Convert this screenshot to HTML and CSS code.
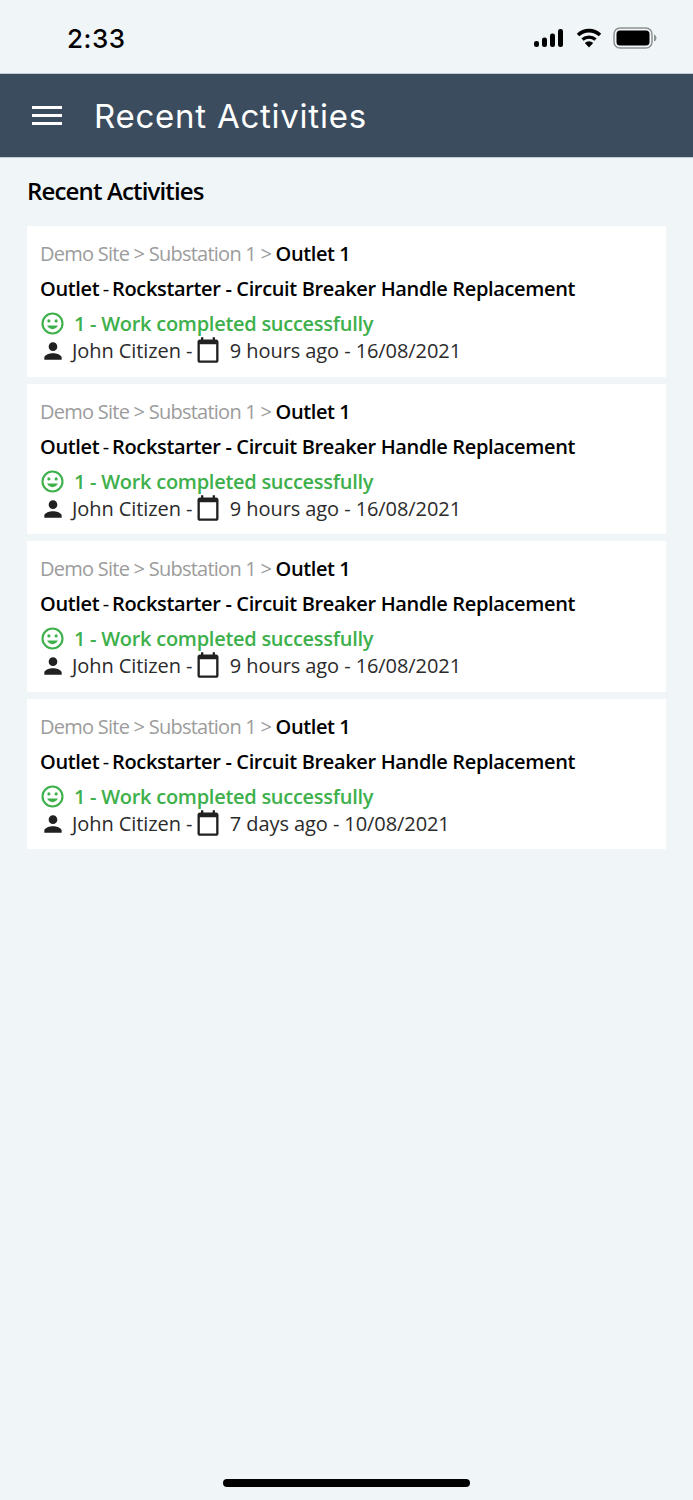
FILE: index.html
```html
<!DOCTYPE html>
<html lang="en">
<head>
<meta charset="UTF-8">
<meta name="viewport" content="width=device-width, initial-scale=1.0">
<title>Recent Activities</title>
<link rel="stylesheet" href="styles.css">
</head>
<body>

<svg class="icon-defs" width="0" height="0">
    <symbol id="i-smile" viewBox="0 0 24 24">
        <circle cx="12" cy="12" r="9.6" fill="none" stroke="currentColor" stroke-width="2"/>
        <circle cx="8.5" cy="9.5" r="1.5" fill="currentColor"/>
        <circle cx="15.5" cy="9.5" r="1.5" fill="currentColor"/>
        <path d="M12 17.5c2.33 0 4.31-1.46 5.11-3.5H6.89c.8 2.04 2.78 3.5 5.11 3.5z" fill="currentColor"/>
    </symbol>
    <symbol id="i-person" viewBox="0 0 24 24">
        <path d="M12 12c2.21 0 4-1.79 4-4s-1.79-4-4-4-4 1.79-4 4 1.79 4 4 4zm0 2c-2.67 0-8 1.34-8 4v2h16v-2c0-2.66-5.33-4-8-4z" fill="currentColor"/>
    </symbol>
    <symbol id="i-cal" viewBox="0 0 24 24">
        <path d="M19 3h-1V1h-2v2H8V1H6v2H5c-1.100 0-2 .9-2 2v16c0 1.100.9 2 2 2h14c1.100 0 2-.9 2-2V5c0-1.100-.9-2-2-2zm0 18H5V7h14v14z" fill="currentColor"/>
    </symbol>
</svg>

<div class="status-bar">
    <div class="clock">2:33</div>
    <div class="status-icons">
        <svg width="30" height="18" viewBox="0 0 30 18">
            <rect x="0" y="12" width="5" height="6" rx="2.2" fill="#000"/>
            <rect x="8" y="8.500" width="5" height="9.500" rx="2.2" fill="#000"/>
            <rect x="16" y="4.500" width="5" height="13.500" rx="2.2" fill="#000"/>
            <rect x="24" y="0" width="5" height="18" rx="2.2" fill="#000"/>
        </svg>
        <svg width="26" height="20" viewBox="0 0 26 20">
            <path d="M2 7 A16 16 0 0 1 24 7" fill="none" stroke="#000" stroke-width="3.600"/>
            <path d="M6.500 11.500 A10 10 0 0 1 19.500 11.500" fill="none" stroke="#000" stroke-width="3.400"/>
            <path d="M13 19.500 L8.800 15 A6 6 0 0 1 17.200 15 Z" fill="#000"/>
        </svg>
        <svg width="44" height="22" viewBox="0 0 44 22">
            <rect x="1" y="1" width="38" height="20" rx="6" fill="none" stroke="#8e9192" stroke-width="1.500"/>
            <rect x="3.500" y="3.500" width="33" height="15" rx="3.500" fill="#000"/>
            <path d="M41 7.500c1.500.5 2.500 2 2.500 3.500s-1 3-2.500 3.500z" fill="#8e9192"/>
        </svg>
    </div>
</div>

<div class="app-bar">
    <div class="menu-btn"><span></span><span></span><span></span></div>
    <div class="app-title">Recent Activities</div>
</div>

<div class="content">
    <div class="page-title">Recent Activities</div>

    <div class="card">
        <div class="crumbs">Demo Site &gt; Substation 1 &gt; <b>Outlet 1</b></div>
        <div class="job"><span class="job-type">Outlet</span> <i>-</i> Rockstarter - Circuit Breaker Handle Replacement</div>
        <div class="result"><svg class="ic-smile"><use href="#i-smile"/></svg>1 - Work completed successfully</div>
        <div class="meta"><svg class="ic-person"><use href="#i-person"/></svg>John Citizen -<svg class="ic-cal"><use href="#i-cal"/></svg>9 hours ago - 16/08/2021</div>
    </div>
    <div class="card">
        <div class="crumbs">Demo Site &gt; Substation 1 &gt; <b>Outlet 1</b></div>
        <div class="job"><span class="job-type">Outlet</span> <i>-</i> Rockstarter - Circuit Breaker Handle Replacement</div>
        <div class="result"><svg class="ic-smile"><use href="#i-smile"/></svg>1 - Work completed successfully</div>
        <div class="meta"><svg class="ic-person"><use href="#i-person"/></svg>John Citizen -<svg class="ic-cal"><use href="#i-cal"/></svg>9 hours ago - 16/08/2021</div>
    </div>
    <div class="card">
        <div class="crumbs">Demo Site &gt; Substation 1 &gt; <b>Outlet 1</b></div>
        <div class="job"><span class="job-type">Outlet</span> <i>-</i> Rockstarter - Circuit Breaker Handle Replacement</div>
        <div class="result"><svg class="ic-smile"><use href="#i-smile"/></svg>1 - Work completed successfully</div>
        <div class="meta"><svg class="ic-person"><use href="#i-person"/></svg>John Citizen -<svg class="ic-cal"><use href="#i-cal"/></svg>9 hours ago - 16/08/2021</div>
    </div>
    <div class="card">
        <div class="crumbs">Demo Site &gt; Substation 1 &gt; <b>Outlet 1</b></div>
        <div class="job"><span class="job-type">Outlet</span> <i>-</i> Rockstarter - Circuit Breaker Handle Replacement</div>
        <div class="result"><svg class="ic-smile"><use href="#i-smile"/></svg>1 - Work completed successfully</div>
        <div class="meta"><svg class="ic-person"><use href="#i-person"/></svg>John Citizen -<svg class="ic-cal"><use href="#i-cal"/></svg>7 days ago - 10/08/2021</div>
    </div>
</div>

<div class="home-bar"></div>

</body>
</html>
```
FILE: styles.css
```css
body {
    margin: 0;
    height: 1500px;
    position: relative;
    overflow: hidden;
    background-color: #f0f5f8;
    font-family: "Open Sans", sans-serif;
    color: #000;
}
.icon-defs {
    position: absolute;
}
.status-bar {
    height: 73px;
    display: flex;
    justify-content: space-between;
    align-items: center;
    padding: 3px 36px 0 67px;
    box-sizing: border-box;
}
.clock {
    font-family: Inter, sans-serif;
    font-size: 26px;
    font-weight: 500;
    letter-spacing: 0.5px;
}
.status-icons {
    display: flex;
    align-items: center;
    gap: 11.5px;
}
.app-bar {
    height: 85px;
    background-color: #3a4c5e;
    border-top: 1px solid #c3ccd3;
    border-bottom: 1px solid #c3ccd3;
    box-sizing: border-box;
    display: flex;
    align-items: center;
}
.menu-btn {
    width: 30px;
    margin-left: 32px;
    display: flex;
    flex-direction: column;
    gap: 5px;
}
.menu-btn span {
    height: 3px;
    background-color: #fff;
}
.app-title {
    margin-left: 32px;
    font-family: Inter, sans-serif;
    font-size: 33px;
    letter-spacing: 0.75px;
    color: #fff;
}
.content {
    padding: 0 27px;
}
.page-title {
    font-size: 24px;
    font-weight: 600;
    letter-spacing: -0.85px;
    line-height: 32px;
    padding: 17px 0 19.1px;
}
.card {
    background-color: #fff;
    height: 150.6px;
    box-sizing: border-box;
    margin-bottom: 6.9px;
    padding: 12px 13px 0;
}
.crumbs {
    font-size: 20px;
    line-height: 32px;
    font-weight: 500;
    letter-spacing: -0.75px;
    color: #9c9c9c;
}
.crumbs b {
    font-weight: 600;
    letter-spacing: -0.4px;
    color: #000;
}
.job {
    font-size: 20px;
    line-height: 32px;
    margin-top: 3px;
    font-weight: 600;
    letter-spacing: -0.35px;
    white-space: nowrap;
}
.job i {
    font-style: normal;
    font-weight: 400;
    margin: 0 -1.5px 0 -1.5px;
}
.result {
    margin-top: 4px;
    font-size: 20px;
    line-height: 29px;
    font-weight: 600;
    letter-spacing: -0.27px;
    color: #3eb04b;
    display: flex;
    align-items: center;
}
.ic-smile {
    width: 25px;
    height: 25px;
    margin-right: 9px;
}
.meta {
    font-size: 20px;
    line-height: 24px;
    letter-spacing: -0.08px;
    color: #2b2b2b;
    display: flex;
    align-items: center;
}
.ic-person {
    width: 26px;
    height: 26px;
    margin-right: 6px;
    color: #212121;
}
.ic-cal {
    width: 28px;
    height: 28px;
    margin: -2px 7.5px 0 2px;
    color: #212121;
}
.home-bar {
    position: absolute;
    left: 223px;
    top: 1479px;
    width: 247px;
    height: 8px;
    border-radius: 4px;
    background-color: #000;
}
```
